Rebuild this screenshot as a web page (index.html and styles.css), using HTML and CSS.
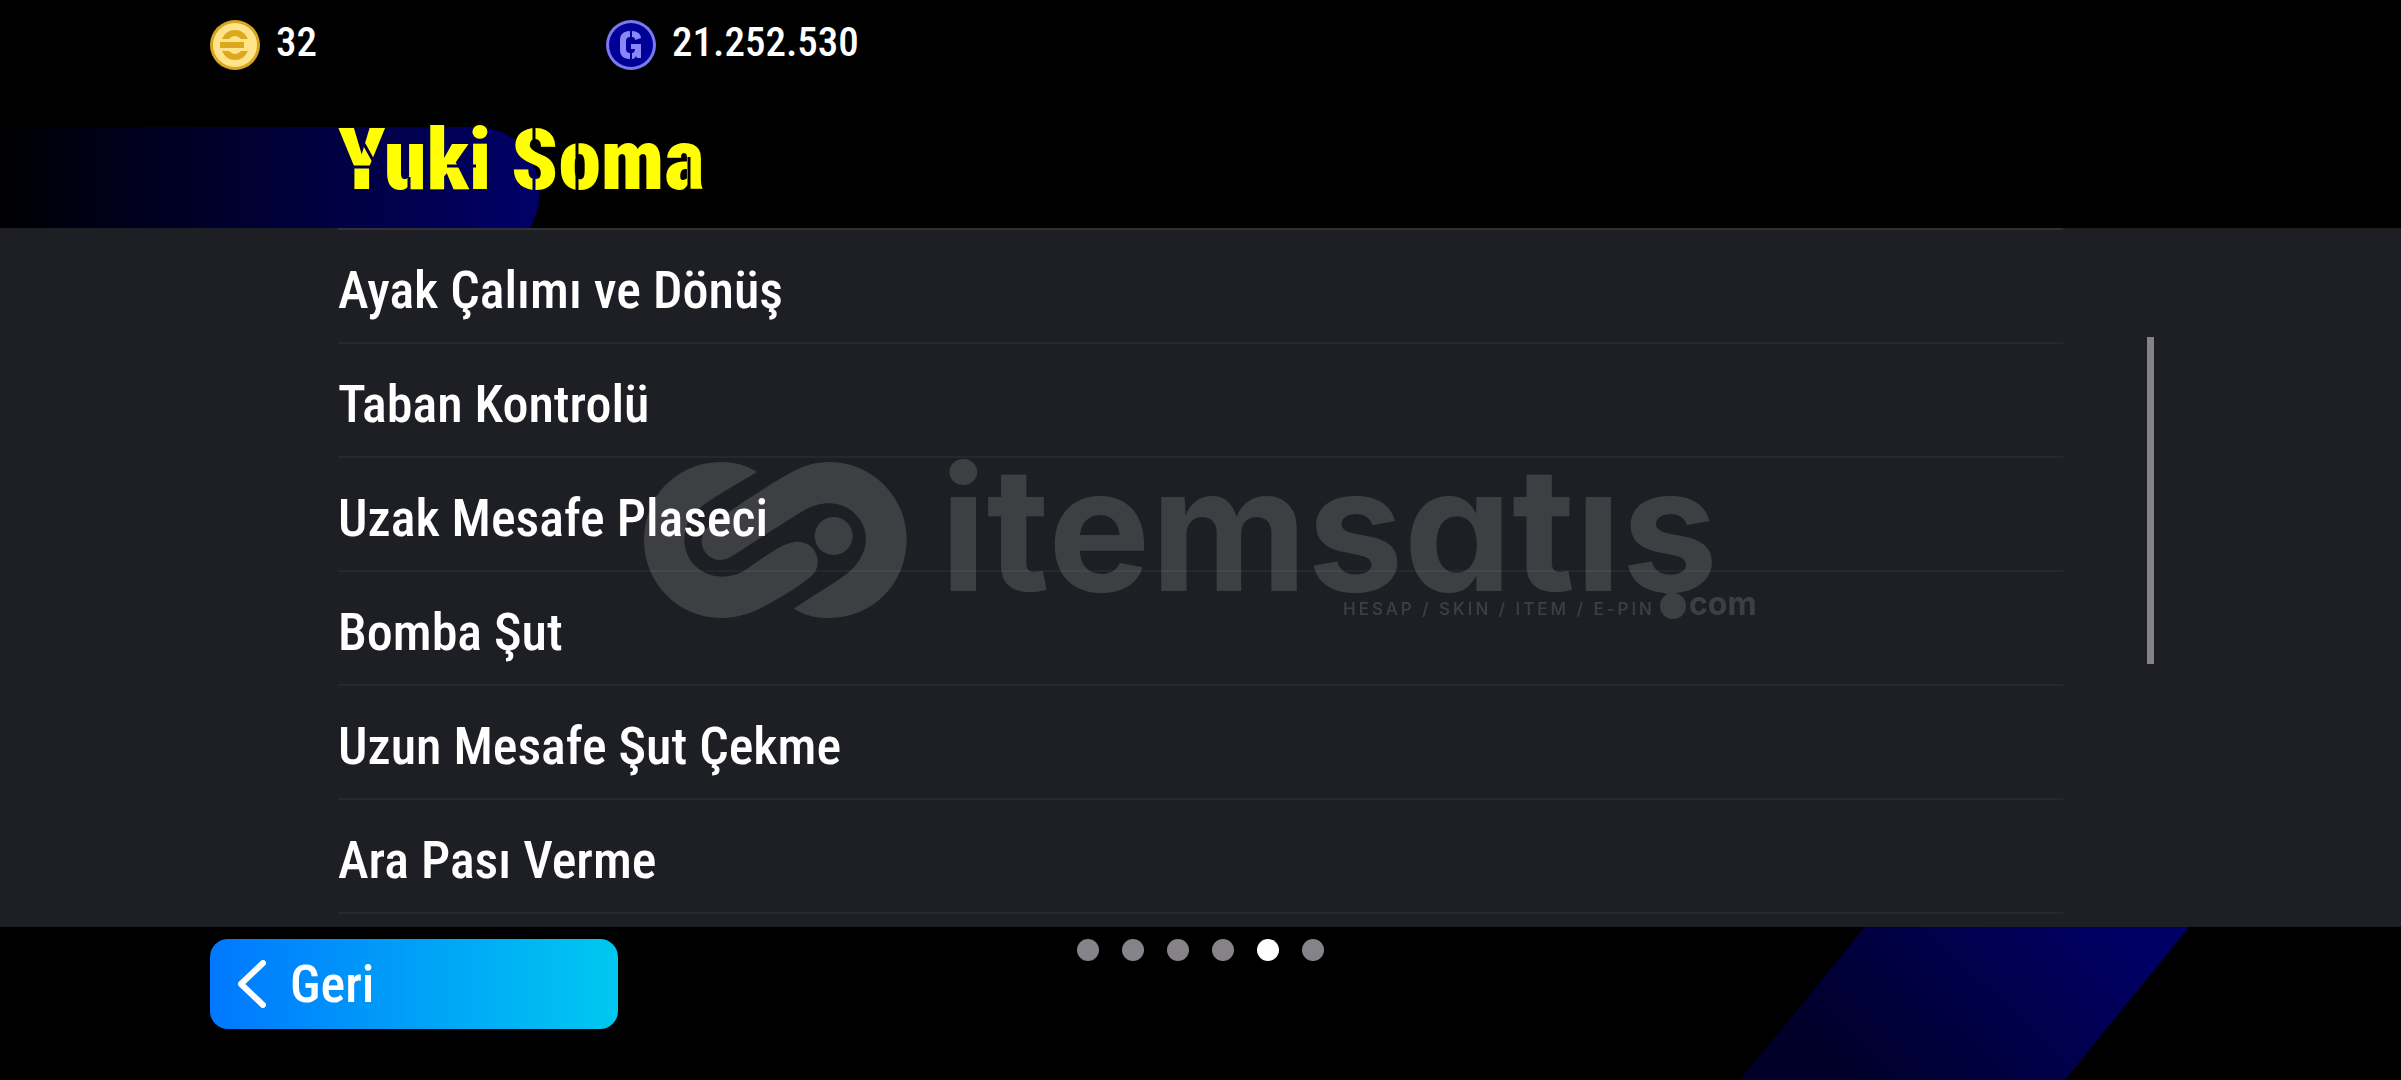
FILE: index.html
```html
<!DOCTYPE html>
<html lang="tr">
<head>
<meta charset="utf-8">
<meta name="viewport" content="width=device-width, initial-scale=1">
<title>Yuki Soma</title>
<link rel="stylesheet" href="styles.css">
</head>
<body>
<header class="top">
  <div class="wallet">
    <div class="balance">
      <svg class="coin" viewBox="0 0 50 50" aria-hidden="true">
        <circle cx="25" cy="25" r="25" fill="#d9a520"/>
        <circle cx="25" cy="25" r="22" fill="#ffe48c"/>
        <path d="M12 19C15 13 19 10 25 10S35 13 38 19H31C29 17 27 16 25 16S21 17 19 19ZM10 22H34V28H10ZM12 31H19C21 33 23 34 25 34S29 33 31 31H38C35 37 31 40 25 40S15 37 12 31Z" fill="#dca81e"/>
      </svg>
      <span class="amount">32</span>
    </div>
    <div class="balance">
      <svg class="coin" viewBox="0 0 50 50" aria-hidden="true">
        <circle cx="25" cy="25" r="25" fill="#7a78f0"/>
        <circle cx="25" cy="25" r="22" fill="#000096"/>
        <path d="M24 11V17C21 17 20 19 20 21V29C20 31 21 33 24 33V39C17 39 14 35 14 30V20C14 15 17 11 24 11ZM26 11C31 11 35 14 35 18L29 20C29 18 28 17 26 17ZM25 24H35V38H31L30 36C29 38 28 39 26 39V33C28 33 29 31 29 29H25Z" fill="#8a88f8"/>
      </svg>
      <span class="amount">21.252.530</span>
    </div>
  </div>
  <div class="banner">
    <svg class="banner-shape" viewBox="0 0 540 101" aria-hidden="true">
      <defs><linearGradient id="fade"><stop offset="0" stop-color="#000004"/><stop offset="1" stop-color="#000068"/></linearGradient></defs>
      <path d="M0 0H475C515 0 540 30 539 70C539 80 535 92 530 101H0Z" fill="url(#fade)"/>
    </svg>
    <h1 class="name">
      <svg class="name-art" viewBox="0 0 400 80">
        <mask id="stencil" maskUnits="userSpaceOnUse" x="-5" y="-10" width="410" height="100">
          <rect x="-5" y="-10" width="410" height="100" fill="#fff"/>
          <path d="M0 40H48M26 17L36 35M109 39H138M196 -5V17M196 48V70M239 8V30M239 48V70M351 30V70M71 50V70" fill="none" stroke="#000" stroke-width="3"/>
        </mask>
        <text x="0" y="62" mask="url(#stencil)">Yuki Soma</text>
      </svg>
    </h1>
  </div>
</header>

<main class="panel">
  <ul class="skills">
    <li>Ayak Çalımı ve Dönüş</li>
    <li>Taban Kontrolü</li>
    <li>Uzak Mesafe Plaseci</li>
    <li>Bomba Şut</li>
    <li>Uzun Mesafe Şut Çekme</li>
    <li>Ara Pası Verme</li>
  </ul>
  <div class="scroll-thumb"></div>
</main>

<footer class="bottom">
  <svg class="slash" viewBox="0 0 449 153" aria-hidden="true">
    <defs><linearGradient id="rise" gradientUnits="userSpaceOnUse" x1="140" y1="190" x2="340" y2="-20"><stop offset="0" stop-color="#000028"/><stop offset="1" stop-color="#000064"/></linearGradient></defs>
    <path d="M125 0H449L325 153H0Z" fill="url(#rise)"/>
  </svg>
  <button class="back" type="button">
    <svg class="chevron" viewBox="0 0 28 48" aria-hidden="true"><path d="M25 3L3 24L25 45" fill="none" stroke="#fff" stroke-width="6" stroke-linecap="round" stroke-linejoin="round"/></svg>
    Geri
  </button>
  <div class="pages" role="radiogroup" aria-label="Sayfalar">
    <input type="radio" name="page" aria-label="1">
    <input type="radio" name="page" aria-label="2">
    <input type="radio" name="page" aria-label="3">
    <input type="radio" name="page" aria-label="4">
    <input type="radio" name="page" aria-label="5" checked>
    <input type="radio" name="page" aria-label="6">
  </div>
</footer>

<svg class="watermark" viewBox="0 0 1114 160">
  <clipPath id="above-dot"><rect x="290" y="-20" width="824" height="154"/></clipPath>
  <g transform="translate(-24 -20) scale(.3333)">
    <path d="M411 96C380 76 345 66 305 66C170 66 72 170 72 300C72 430 175 534 305 534C350 534 395 520 435 498C485 472 535 440 570 412C590 396 596 375 592 355C585 320 555 300 520 307C495 311 470 328 440 346C410 366 385 385 365 397C340 408 320 410 305 410C240 408 195 360 193 303C193 255 210 225 250 195C300 160 355 130 411 96Z"/>
    <path d="M521 506C555 526 590 534 625 534C760 534 860 430 860 297C860 170 755 66 628 66C585 66 550 78 515 97C450 132 350 198 300 235C265 255 245 275 245 305C247 340 275 361 303 360C320 359 332 352 350 340C410 300 480 255 540 218C570 200 595 190 627 190C690 190 738 240 738 297C738 335 715 375 680 402C640 432 575 470 521 506Z"/>
    <circle cx="641" cy="288" r="57"/>
  </g>
  <g clip-path="url(#above-dot)"><text class="wordmark" x="296" y="131">itemsatış</text></g>
  <text class="tagline" x="699" y="155">HESAP / SKIN / ITEM / E-PIN</text>
  <circle cx="1029" cy="146" r="13"/>
  <text class="suffix" x="1045" y="155">com</text>
</svg>
</body>
</html>
```
FILE: styles.css
```css
* {
  box-sizing: border-box;
}

body {
  position: relative;
  display: flex;
  flex-direction: column;
  min-height: 100vh;
  margin: 0;
  overflow-x: hidden;
  background: #000;
  color: #fff;
  font-family: "Roboto Condensed", Roboto, sans-serif;
  font-weight: 500;
}

.wallet {
  display: grid;
  grid-template-columns: 396px auto;
  justify-content: start;
  padding: 20px 210px 0;
}

.balance {
  display: flex;
  gap: 16px;
}

.coin {
  width: 50px;
  height: 50px;
}

.amount {
  font-size: 41px;
  line-height: 44px;
}

.banner {
  position: relative;
  height: 101px;
  margin-top: 57px;
  padding-left: 338px;
}

.banner-shape {
  position: absolute;
  top: 0;
  left: 0;
  width: 540px;
  height: 101px;
}

.name {
  position: relative;
  margin: 0;
  font-size: 86px;
  font-weight: 900;
}

.name-art {
  display: block;
  width: 400px;
  height: 80px;
  overflow: visible;
  fill: #ff0;
}

.panel {
  position: relative;
  flex: 1;
  padding-bottom: 13px;
  padding-inline: 338px;
  background: #1e1f24;
}

.skills {
  margin: 0;
  padding: 0;
  list-style: none;
  border-top: 2px solid #303137;
}

.skills li {
  height: 114px;
  padding-top: 31px;
  border-bottom: 2px solid #27282d;
  font-size: 52px;
  line-height: 60px;
}

.scroll-thumb {
  position: absolute;
  top: 109px;
  right: 247px;
  width: 7px;
  height: 327px;
  background: #858387;
}

.bottom {
  position: relative;
  display: grid;
  grid-template-columns: 1fr auto 1fr;
  align-items: start;
  min-height: 153px;
  padding: 12px 210px 0;
}

.slash {
  position: absolute;
  top: 0;
  right: 212px;
  width: 449px;
  height: 153px;
}

.back {
  display: flex;
  align-items: center;
  gap: 24px;
  width: 408px;
  height: 90px;
  padding: 0 28px;
  border: 0;
  border-radius: 18px;
  background: linear-gradient(to right, #0078ff, #00c8f0);
  color: #fff;
  font: inherit;
  font-size: 52px;
}

.chevron {
  width: 28px;
  height: 48px;
}

.pages {
  display: flex;
  gap: 23px;
}

.pages input {
  width: 22px;
  height: 22px;
  margin: 0;
  border-radius: 50%;
  background: #858387;
  appearance: none;
}

.pages input:checked {
  background: #fff;
}

.watermark {
  position: absolute;
  top: 50%;
  left: 50%;
  width: 1114px;
  height: 160px;
  margin: -80px 0 0 -557px;
  overflow: visible;
  fill: #fff;
  opacity: .14;
  pointer-events: none;
  font-family: Inter, sans-serif;
}

.wordmark {
  font-size: 172px;
  font-weight: 700;
  font-feature-settings: "cv11";
}

.tagline {
  font-size: 17px;
  font-weight: 500;
  letter-spacing: 3px;
}

.suffix {
  font-size: 32px;
  font-weight: 700;
}
```
